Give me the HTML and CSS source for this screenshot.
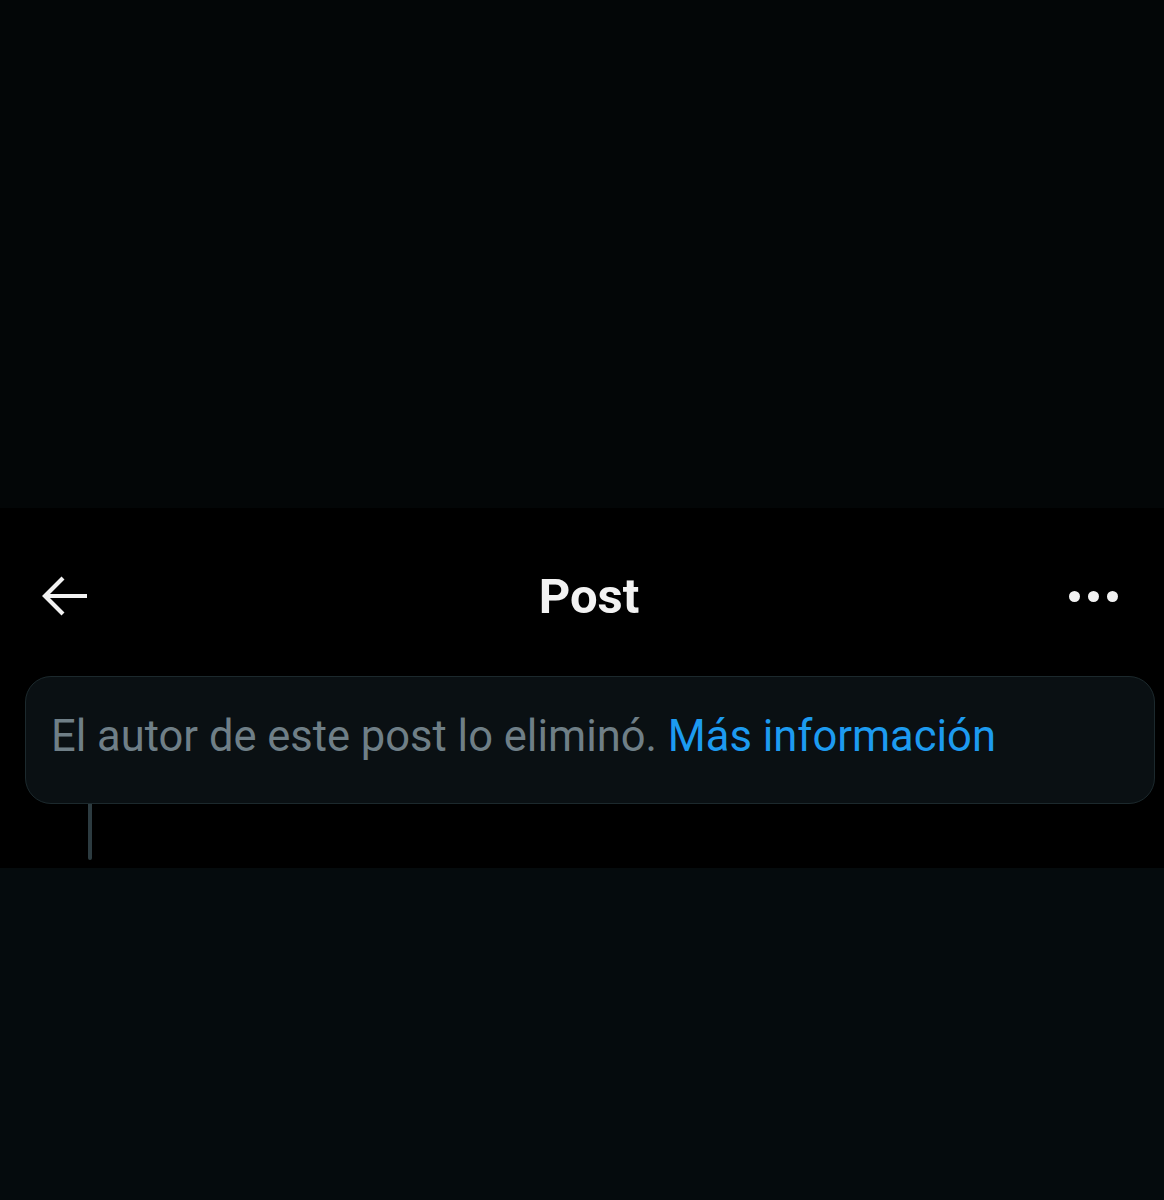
FILE: index.html
```html
<!DOCTYPE html>
<html lang="es">
<head>
<meta charset="utf-8">
<title>Post</title>
<link rel="stylesheet" href="styles.css">
</head>
<body>
<div class="top"></div>
<main class="screen">
  <header class="bar">
    <div class="bar-left">
      <svg class="back" width="48" height="42" viewBox="0 0 48 42" aria-hidden="true">
        <path d="M46 21H4M22 3L4 21L22 39" fill="none" stroke="#f2f2f2" stroke-width="4.2" stroke-linecap="butt" stroke-linejoin="miter"/>
      </svg>
    </div>
    <h1 class="title">Post</h1>
    <div class="bar-right">
      <span class="dot"></span><span class="dot"></span><span class="dot"></span>
    </div>
  </header>
  <section class="notice">
    <p class="notice-text">El autor de este post lo eliminó. <a class="link" href="#">Más información</a></p>
  </section>
  <div class="thread"></div>
</main>
<div class="bottom"></div>
</body>
</html>
```
FILE: styles.css
```css
html, body {
  margin: 0;
  padding: 0;
  background: #050b0d;
  font-family: Roboto, "Liberation Sans", sans-serif;
}
.top {
  height: 508px;
  background: #030607;
}
.screen {
  background: #000;
  height: 360px;
  padding: 0 9px 0 25px;
  box-sizing: border-box;
  display: flex;
  flex-direction: column;
}
.bar {
  height: 88px;
  margin-top: 44px;
  display: grid;
  grid-template-columns: 1fr auto 1fr;
  align-items: center;
}
.bar-left {
  display: flex;
  align-items: center;
  padding-left: 16px;
}
.back {
  display: block;
}
.title {
  margin: 0 0 0 -2px;
  color: #f2f2f2;
  font-weight: 700;
  font-size: 49px;
  letter-spacing: 0;
}
.bar-right {
  display: flex;
  justify-content: flex-end;
  gap: 8px;
  padding-right: 37px;
}
.dot {
  width: 11px;
  height: 11px;
  border-radius: 50%;
  background: #f2f2f2;
}
.notice {
  margin-top: 36px;
  height: 128px;
  box-sizing: border-box;
  background: #0a1013;
  border: 1px solid #1c292d;
  border-radius: 26px;
  display: flex;
  align-items: center;
  padding: 0 25px 8px;
}
.notice-text {
  margin: 0;
  font-size: 43.5px;
  letter-spacing: 0;
  color: #6f7f87;
}
.link {
  color: #1d9bf0;
  text-decoration: none;
}
.thread {
  width: 4px;
  height: 56px;
  margin-left: 63px;
  background: #2c3b40;
  border-radius: 0 0 2px 2px;
}
.bottom {
  height: 332px;
  background: #050b0d;
}
```
